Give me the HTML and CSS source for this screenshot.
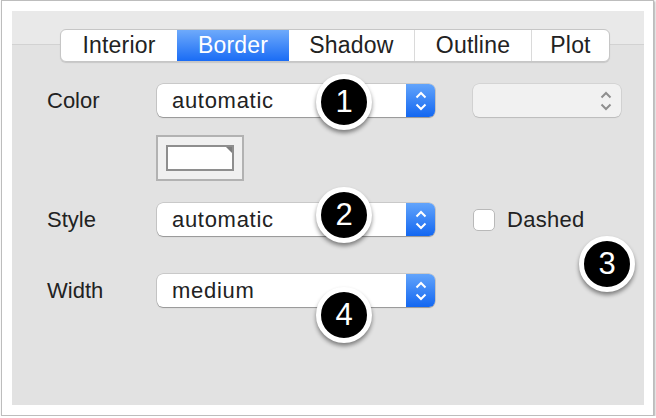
FILE: index.html
```html
<!DOCTYPE html>
<html lang="en">
<head>
  <meta charset="UTF-8">
  <title>Border Settings</title>
  <link rel="stylesheet" href="styles.css">
</head>
<body>
  <div class="frame">
    <div class="panel">
      <div class="tabs">
        <div class="tab tab-interior">Interior</div>
        <div class="tab tab-border active">Border</div>
        <div class="tab tab-shadow">Shadow</div>
        <div class="tab tab-outline">Outline</div>
        <div class="tab tab-plot">Plot</div>
      </div>

      <div class="form">
        <div class="row row-color">
          <div class="label">Color</div>
          <div class="popup">
            <span class="value">automatic</span>
            <span class="stepper">
              <svg width="12" height="20" viewBox="0 0 12 20"><path d="M1.5 6.5 L6 2 L10.5 6.5 M1.5 13.5 L6 18 L10.5 13.5" fill="none" stroke="#fff" stroke-width="2"/></svg>
            </span>
          </div>
          <div class="popup disabled">
            <svg width="12" height="20" viewBox="0 0 12 20"><path d="M1.5 6.5 L6 2 L10.5 6.5 M1.5 13.5 L6 18 L10.5 13.5" fill="none" stroke="#8e8e8e" stroke-width="2"/></svg>
          </div>
        </div>

        <div class="row row-well">
          <div class="label"></div>
          <div class="well">
            <div class="swatch"><span class="corner"></span></div>
          </div>
        </div>

        <div class="row row-style">
          <div class="label">Style</div>
          <div class="popup">
            <span class="value">automatic</span>
            <span class="stepper">
              <svg width="12" height="20" viewBox="0 0 12 20"><path d="M1.5 6.5 L6 2 L10.5 6.5 M1.5 13.5 L6 18 L10.5 13.5" fill="none" stroke="#fff" stroke-width="2"/></svg>
            </span>
          </div>
          <label class="check"><span class="box"></span>Dashed</label>
        </div>

        <div class="row row-width">
          <div class="label">Width</div>
          <div class="popup">
            <span class="value">medium</span>
            <span class="stepper">
              <svg width="12" height="20" viewBox="0 0 12 20"><path d="M1.5 6.5 L6 2 L10.5 6.5 M1.5 13.5 L6 18 L10.5 13.5" fill="none" stroke="#fff" stroke-width="2"/></svg>
            </span>
          </div>
        </div>
      </div>

      <div class="badge badge-1">1</div>
      <div class="badge badge-2">2</div>
      <div class="badge badge-3">3</div>
      <div class="badge badge-4">4</div>
    </div>
  </div>
</body>
</html>
```

FILE: styles.css
```css
body {
  margin: 0;
  background: #fff;
  font-family: "Liberation Sans", Arial, sans-serif;
  color: #222;
}
.frame {
  box-sizing: border-box;
  width: 653px;
  height: 416px;
  margin-left: 1px;
  padding: 10px 9px 10px 10px;
  background: #fff;
  border: 1px solid #bdbdbd;
  box-shadow: 1px 1px 2px rgba(0, 0, 0, 0.35);
}
.panel {
  position: relative;
  height: 394px;
  padding-top: 18px;
  box-sizing: border-box;
  background: linear-gradient(#e9e9e9 0, #e9e9e9 33px, #d2d2d2 33px, #d2d2d2 34px, #e2e2e2 34px);
}

/* segmented tabs */
.tabs {
  display: flex;
  width: 550px;
  height: 33px;
  margin-left: 48px;
  box-sizing: border-box;
  background: #fff;
  border: 1px solid #c6c6c6;
  border-radius: 6px;
  box-shadow: 0 1px 1px rgba(0, 0, 0, 0.12);
  overflow: hidden;
}
.tab {
  display: flex;
  align-items: center;
  justify-content: center;
  font-size: 23px;
  letter-spacing: 0.2px;
  border-left: 1px solid #dadada;
  box-sizing: border-box;
}
.tab:first-child { border-left: none; }
.tab-interior { width: 116px; }
.tab-border { width: 112px; }
.tab-shadow { width: 125px; }
.tab-outline { width: 117px; }
.tab-plot { flex: 1; }
.tab.active {
  color: #fff;
  border-left: none;
  background: linear-gradient(#6eaafb, #1a6cf5);
}
.tab.active + .tab { border-left: none; }

/* form rows */
.form {
  padding-left: 35px;
  margin-top: 22px;
}
.row {
  display: flex;
  align-items: center;
  height: 33px;
}
.label {
  width: 110px;
  font-size: 22px;
}
.row-well {
  height: 46px;
  margin-top: 18px;
}
.row-style { margin-top: 22px; }
.row-width { margin-top: 38px; }

.popup {
  display: flex;
  align-items: center;
  width: 278px;
  height: 33px;
  box-sizing: border-box;
  background: #fff;
  border-radius: 6px;
  box-shadow: 0 0 0 0.5px rgba(0, 0, 0, 0.22), 0 1px 1px rgba(0, 0, 0, 0.25);
  overflow: hidden;
}
.popup .value {
  flex: 1;
  padding-left: 15px;
  font-size: 22px;
  letter-spacing: 0.7px;
}
.stepper {
  display: flex;
  align-items: center;
  justify-content: center;
  width: 29px;
  height: 100%;
  background: linear-gradient(#62a4fb, #1367f1);
}
.popup.disabled {
  width: 148px;
  margin-left: 38px;
  justify-content: flex-end;
  padding-right: 9px;
  background: #f1f1f1;
  box-shadow: 0 0 0 0.5px rgba(0, 0, 0, 0.12), 0 1px 1px rgba(0, 0, 0, 0.12);
}

/* color well */
.well {
  box-sizing: border-box;
  width: 88px;
  height: 46px;
  padding: 8px;
  background: #f0f0f0;
  border: 2px solid #b2b2b2;
  margin-left: -1px;
}
.swatch {
  position: relative;
  box-sizing: border-box;
  height: 26px;
  background: #fff;
  border: 2px solid #8e8e8e;
}
.corner {
  position: absolute;
  top: 0;
  right: 0;
  width: 0;
  height: 0;
  border-top: 6px solid #7d7d7d;
  border-left: 6px solid transparent;
}

/* checkbox */
.check {
  display: flex;
  align-items: center;
  margin-left: 38px;
  font-size: 22px;
  letter-spacing: 0.3px;
}
.box {
  width: 22px;
  height: 22px;
  box-sizing: border-box;
  margin-right: 12px;
  background: #fff;
  border: 1px solid #b9b9b9;
  border-radius: 5px;
}

/* callout badges */
.badge {
  position: absolute;
  width: 46px;
  height: 46px;
  line-height: 46px;
  text-align: center;
  font-size: 31px;
  color: #fff;
  background: #000;
  border: 5px solid #fff;
  border-radius: 50%;
  box-shadow: 0 3px 4px rgba(0, 0, 0, 0.45);
}
.badge-1 { left: 304px; top: 63px; }
.badge-2 { left: 304px; top: 176px; }
.badge-3 { left: 567px; top: 225px; }
.badge-4 { left: 304px; top: 276px; }
```
